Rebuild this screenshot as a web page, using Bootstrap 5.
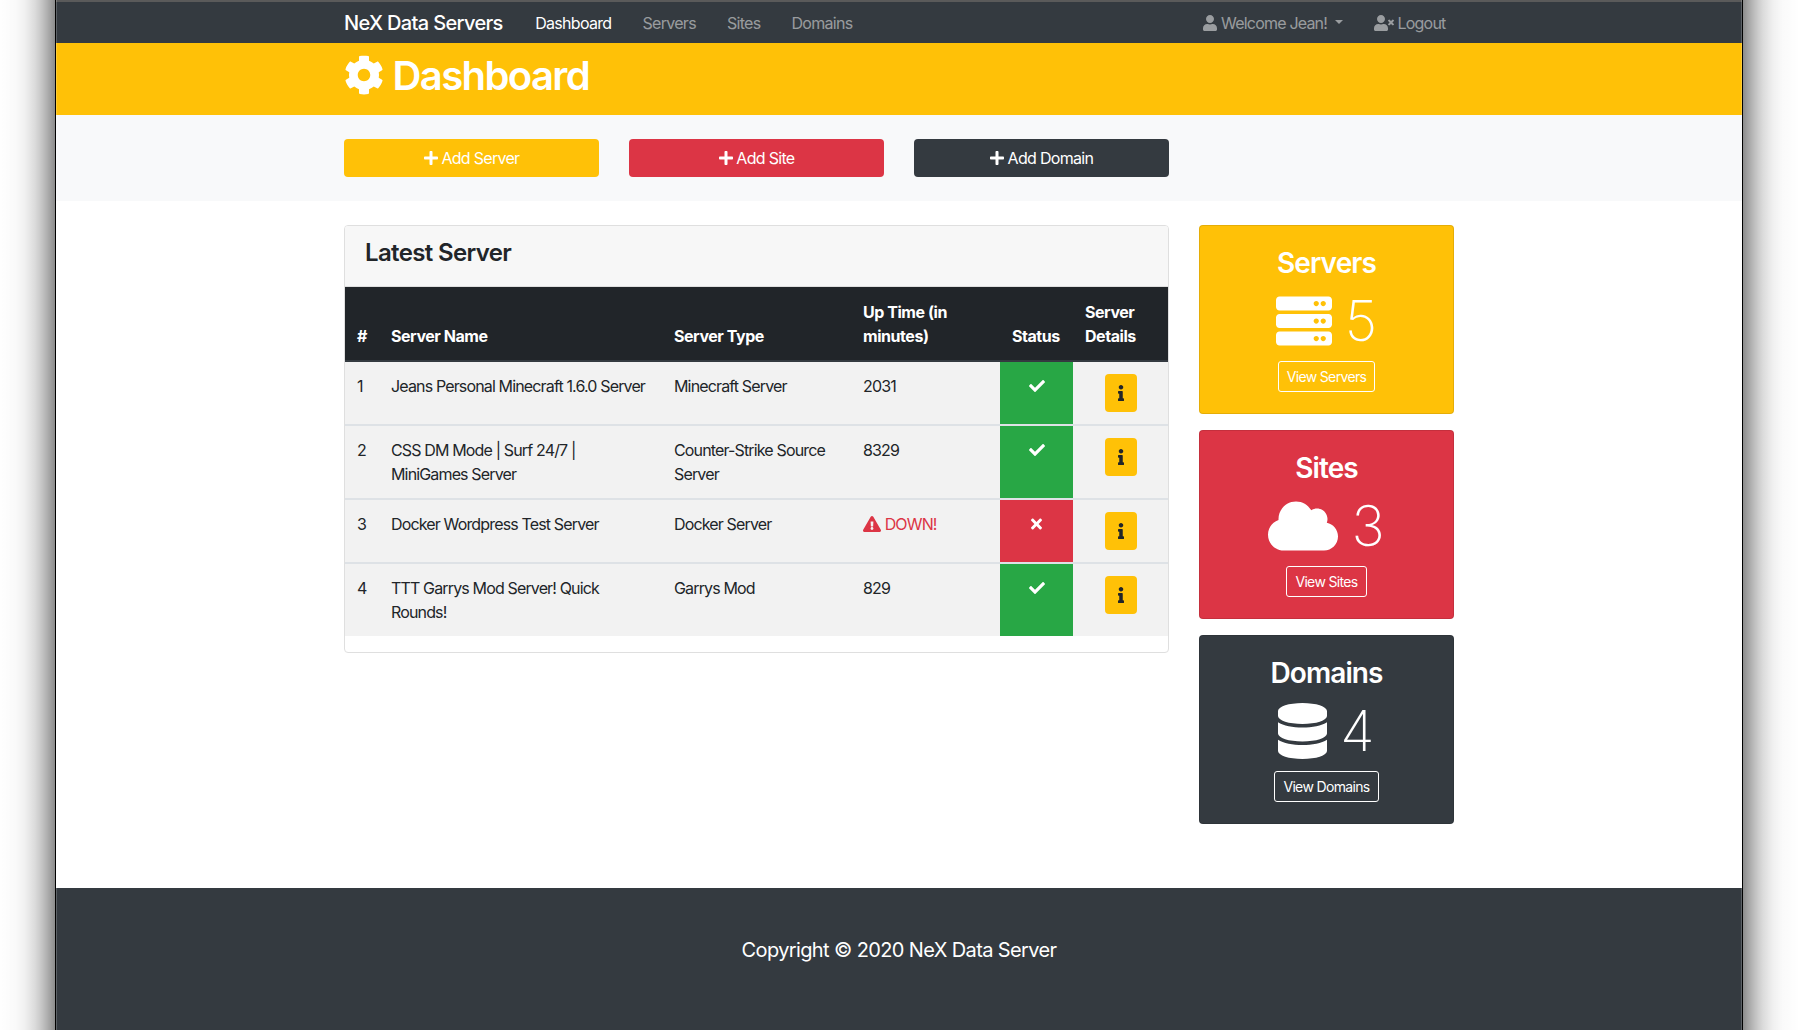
<!DOCTYPE html>
<html>
<head>
    <title>NeX Data Servers</title>
    <link href="https://cdn.jsdelivr.net/npm/bootstrap@5.3.3/dist/css/bootstrap.min.css" rel="stylesheet">
    <style>
        html, body {
          height: 100%;
          overflow: hidden;
          background: #fff;
        }
        body {
          font-family: Inter, "Liberation Sans", sans-serif;
          font-size: 16px;
          letter-spacing: -0.7px;
          color: #212529;
          /* window shadow either side of the frame */
          --shade: rgba(0,0,0,0.003) 0, rgba(0,0,0,0.02) 15px, rgba(0,0,0,0.06) 25px, rgba(0,0,0,0.143) 35px, rgba(0,0,0,0.204) 40px, rgba(0,0,0,0.278) 45px, rgba(0,0,0,0.36) 50px, rgba(0,0,0,0.45) 55px;
          background:
            linear-gradient(to right, var(--shade)) left top / 55px 100% no-repeat,
            linear-gradient(to left, var(--shade)) right top / 55px 100% no-repeat,
            #fff;
        }
        .container {
          max-width: 1140px;
          padding-left: 15px;
          padding-right: 15px;
        }
        .row {
          --bs-gutter-x: 30px;
        }
        .frame {
          position: relative;
          display: flex;
          flex-direction: column;
          height: 1030px;
          margin: 0 55px;
          background: #fff;
          border-left: 1px solid #000;
          border-right: 1px solid #000;
        }
        .frame::after {
          content: "";
          position: absolute;
          inset: 0;
          box-shadow: inset 1px 0 0 rgba(255,255,255,0.2), inset -1px 0 0 rgba(255,255,255,0.2);
          pointer-events: none;
        }
        .ico {
          display: inline-block;
          height: 1em;
          fill: currentColor;
          vertical-align: -0.125em;
        }
        .topbar {
          --bs-navbar-padding-y: 0;
          --bs-navbar-padding-x: 0;
          --bs-navbar-color: rgba(255,255,255,0.5);
          --bs-navbar-hover-color: rgba(255,255,255,0.75);
          --bs-navbar-active-color: #fff;
          --bs-navbar-brand-padding-y: 0;
          --bs-navbar-brand-margin-end: 17px;
          --bs-navbar-brand-font-size: 20px;
          --bs-navbar-brand-color: #fff;
          --bs-navbar-brand-hover-color: #fff;
          --bs-navbar-nav-link-padding-x: 15.5px;
          --bs-nav-link-padding-y: 8px;
          background: #343a40;
          border-top: 2px solid #5a5a5a;
          height: 43px;
        }
        .topbar .navbar-brand {
          font-weight: 500;
          letter-spacing: -0.65px;
        }
        .user-nav {
          margin-right: -7px;
          letter-spacing: -0.8px;
        }
        .title-band {
          background: #ffc107;
          color: #fff;
          padding: 9px 0 15px;
        }
        .title-band h1 {
          font-size: 40px;
          font-weight: 600;
          line-height: 48px;
          letter-spacing: -1.6px;
          margin: 0;
        }
        .action-band {
          background: #f8f9fa;
          padding: 24px 0;
        }
        .act-btn {
          height: 38px;
          color: #fff;
          border: 0;
          border-radius: 4px;
          padding-top: 7px;
          letter-spacing: -0.7px;
        }
        .act-btn:hover {
          color: #fff;
        }
        .fill-yellow { background: #ffc107; color: #fff; }
        .fill-red { background: #dc3545; color: #fff; }
        .fill-dark { background: #343a40; color: #fff; }
        .main-area {
          padding: 24px 0 48px;
        }
        .latest-card {
          border: 1px solid #dfdfdf;
          border-radius: 4px;
          overflow: hidden;
        }
        .latest-card .card-header {
          background: #f7f7f7;
          padding: 13px 20px 11px;
          border-bottom: 1px solid #dfdfdf;
          border-radius: 0;
        }
        .latest-card h4 {
          font-size: 24px;
          font-weight: 570;
          line-height: 28.8px;
          letter-spacing: -0.65px;
          margin: 0 0 7px;
        }
        .srv-table {
          --bs-table-bg: #f2f2f2;
          table-layout: fixed;
          letter-spacing: -0.85px;
          margin-bottom: 16px;
        }
        .srv-table > :not(caption) > * > * {
          padding: 12px;
          border-bottom: 2px solid #dee2e6;
        }
        .srv-table > thead > tr > th {
          padding-top: 13px;
          vertical-align: bottom;
          font-weight: 700;
          letter-spacing: -0.45px;
          border-bottom-color: #343a40;
        }
        .srv-table > tbody > tr:last-child > td {
          border-bottom: 0;
        }
        .srv-table > tbody > tr > .name-cell {
          padding-right: 8px;
        }
        .w-num { width: 34px; }
        .w-name { width: 283px; }
        .w-type { width: 189px; }
        .w-up { width: 149px; }
        .w-stat { width: 73px; }
        .w-info { width: 96px; }
        .srv-table > tbody > tr > .st-up {
          --bs-table-bg: #28a745;
          --bs-table-color: #fff;
          color: #fff;
          text-align: center;
        }
        .srv-table > tbody > tr > .st-down {
          --bs-table-bg: #dc3545;
          --bs-table-color: #fff;
          color: #fff;
          text-align: center;
        }
        .down-text {
          color: #dc3545;
        }
        .info-btn {
          display: flex;
          align-items: center;
          justify-content: center;
          width: 32px;
          height: 38px;
          padding: 0;
          margin: 0 auto;
          border: 0;
          border-radius: 4px;
          background: #ffc107;
          color: #212529;
        }
        .info-btn .ico {
          height: 16px;
        }
        .stat-card {
          height: 189px;
          border-radius: 4px;
          border: 1px solid rgba(0,0,0,0.1);
          padding: 21px 20px 20px;
          margin-bottom: 16px;
          text-align: center;
        }
        .stat-card h3 {
          font-size: 28px;
          font-weight: 600;
          line-height: 33.6px;
          letter-spacing: -0.9px;
          margin: 0 0 7px;
        }
        .stat-num {
          display: flex;
          justify-content: center;
          align-items: center;
          gap: 13px;
          font-size: 56px;
          font-weight: 250;
          line-height: 67px;
          letter-spacing: 0;
          margin-bottom: 6px;
        }
        .stat-num .ico {
          height: 56px;
        }
        .view-btn {
          display: inline-block;
          height: 31px;
          padding: 4px 8px;
          font-size: 14px;
          line-height: 21px;
          letter-spacing: -0.65px;
          color: #fff;
          border: 1px solid #fff;
          border-radius: 3px;
          text-decoration: none;
        }
        .view-btn:hover {
          color: #fff;
        }
        .foot-band {
          flex-grow: 1;
          background: #343a40;
          color: #fff;
          font-size: 20px;
          line-height: 30px;
          letter-spacing: -0.62px;
          padding-top: 47px;
          text-align: center;
        }
    </style>
</head>
<body>

<!-- Icons -->
<svg class="d-none" xmlns="http://www.w3.org/2000/svg">
    <symbol id="i-cog" viewBox="0 0 512 512"><path d="M487.4 315.7l-42.6-24.6c4.3-23.2 4.3-47 0-70.2l42.6-24.6c4.9-2.8 7.1-8.6 5.5-14-11.1-35.6-30-67.8-54.7-94.6-3.8-4.1-10-5.1-14.8-2.3L380.8 110c-17.9-15.4-38.5-27.3-60.8-35.1V25.8c0-5.6-3.9-10.5-9.4-11.7-36.7-8.2-74.3-7.8-109.2 0-5.5 1.2-9.4 6.1-9.4 11.7V75c-22.2 7.9-42.8 19.8-60.8 35.1L88.7 85.5c-4.9-2.8-11-1.9-14.8 2.3-24.7 26.7-43.6 58.9-54.7 94.6-1.7 5.4.6 11.2 5.5 14L67.3 221c-4.3 23.2-4.3 47 0 70.2l-42.6 24.6c-4.9 2.8-7.1 8.6-5.5 14 11.1 35.6 30 67.8 54.7 94.6 3.8 4.1 10 5.1 14.8 2.3l42.6-24.6c17.9 15.4 38.5 27.3 60.8 35.1v49.2c0 5.6 3.9 10.5 9.4 11.7 36.7 8.2 74.3 7.8 109.2 0 5.5-1.2 9.4-6.1 9.4-11.7v-49.2c22.2-7.9 42.8-19.8 60.8-35.1l42.6 24.6c4.9 2.8 11 1.9 14.8-2.3 24.7-26.7 43.6-58.9 54.7-94.6 1.5-5.5-.7-11.3-5.6-14.1zM256 336c-44.1 0-80-35.9-80-80s35.9-80 80-80 80 35.9 80 80-35.9 80-80 80z"/></symbol>
    <symbol id="i-user" viewBox="0 0 448 512"><path d="M224 256c70.7 0 128-57.3 128-128S294.7 0 224 0 96 57.3 96 128s57.3 128 128 128zm89.6 32h-16.7c-22.2 10.2-46.9 16-72.9 16s-50.6-5.8-72.9-16h-16.7C60.2 288 0 348.2 0 422.4V464c0 26.5 21.5 48 48 48h352c26.5 0 48-21.5 48-48v-41.6c0-74.2-60.2-134.4-134.4-134.4z"/></symbol>
    <symbol id="i-user-x" viewBox="0 0 640 512"><path d="M589.6 240l45.6-45.6c6.3-6.3 6.3-16.5 0-22.8l-22.8-22.8c-6.3-6.3-16.5-6.3-22.8 0L544 194.4l-45.6-45.6c-6.3-6.3-16.5-6.3-22.8 0l-22.8 22.8c-6.3 6.3-6.3 16.5 0 22.8l45.6 45.6-45.6 45.6c-6.3 6.3-6.3 16.5 0 22.8l22.8 22.8c6.3 6.3 16.5 6.3 22.8 0l45.6-45.6 45.6 45.6c6.3 6.3 16.5 6.3 22.8 0l22.8-22.8c6.3-6.3 6.3-16.5 0-22.8L589.6 240zM224 256c70.7 0 128-57.3 128-128S294.7 0 224 0 96 57.3 96 128s57.3 128 128 128zm89.6 32h-16.7c-22.2 10.2-46.9 16-72.9 16s-50.6-5.8-72.9-16h-16.7C60.2 288 0 348.2 0 422.4V464c0 26.5 21.5 48 48 48h352c26.5 0 48-21.5 48-48v-41.6c0-74.2-60.2-134.4-134.4-134.4z"/></symbol>
    <symbol id="i-plus" viewBox="0 0 448 512"><path d="M416 208H272V64c0-17.67-14.33-32-32-32h-32c-17.67 0-32 14.33-32 32v144H32c-17.67 0-32 14.33-32 32v32c0 17.67 14.33 32 32 32h144v144c0 17.67 14.33 32 32 32h32c17.67 0 32-14.33 32-32V304h144c17.67 0 32-14.33 32-32v-32c0-17.67-14.33-32-32-32z"/></symbol>
    <symbol id="i-check" viewBox="0 0 512 512"><path d="M173.898 439.404l-166.4-166.4c-9.997-9.997-9.997-26.206 0-36.204l36.203-36.204c9.997-9.998 26.207-9.998 36.204 0L192 312.69 432.095 72.596c9.997-9.997 26.207-9.997 36.204 0l36.203 36.204c9.997 9.997 9.997 26.206 0 36.204l-294.4 294.401c-9.998 9.997-26.207 9.997-36.204-.001z"/></symbol>
    <symbol id="i-times" viewBox="0 0 352 512"><path d="M242.72 256l100.07-100.07c12.28-12.28 12.28-32.19 0-44.48l-22.24-22.24c-12.28-12.28-32.19-12.28-44.48 0L176 189.28 75.93 89.21c-12.28-12.28-32.19-12.28-44.48 0L9.21 111.45c-12.28 12.28-12.28 32.19 0 44.48L109.28 256 9.21 356.07c-12.28 12.28-12.28 32.19 0 44.48l22.24 22.24c12.28 12.28 32.2 12.28 44.48 0L176 322.72l100.07 100.07c12.28 12.28 32.2 12.28 44.48 0l22.24-22.24c12.28-12.28 12.28-32.19 0-44.48L242.72 256z"/></symbol>
    <symbol id="i-warn" viewBox="0 0 576 512"><path d="M569.517 440.013C587.975 472.007 564.806 512 527.94 512H48.054c-36.937 0-59.999-40.055-41.577-71.987L246.423 24.035c18.467-32.009 64.72-31.951 83.154 0l239.94 416.978zM288 354c-25.405 0-46 20.595-46 46s20.595 46 46 46 46-20.595 46-46-20.595-46-46-46zm-43.673-165.346l7.418 136c.347 6.364 5.609 11.346 11.982 11.346h48.546c6.373 0 11.635-4.982 11.982-11.346l7.418-136c.375-6.874-5.098-12.654-11.982-12.654h-63.383c-6.884 0-12.356 5.78-11.981 12.654z"/></symbol>
    <symbol id="i-info" viewBox="0 0 192 512"><path d="M20 424.229h20V279.771H20c-11.046 0-20-8.954-20-20V212c0-11.046 8.954-20 20-20h112c11.046 0 20 8.954 20 20v212.229h20c11.046 0 20 8.954 20 20V492c0 11.046-8.954 20-20 20H20c-11.046 0-20-8.954-20-20v-47.771c0-11.046 8.954-20 20-20zM96 0C56.235 0 24 32.235 24 72s32.235 72 72 72 72-32.235 72-72S135.764 0 96 0z"/></symbol>
    <symbol id="i-server" viewBox="0 0 512 512"><path fill-rule="evenodd" d="M480 160H32c-17.673 0-32-14.327-32-32V64c0-17.673 14.327-32 32-32h448c17.673 0 32 14.327 32 32v64c0 17.673-14.327 32-32 32zm-48-88c-13.255 0-24 10.745-24 24s10.745 24 24 24 24-10.745 24-24-10.745-24-24-24zm-64 0c-13.255 0-24 10.745-24 24s10.745 24 24 24 24-10.745 24-24-10.745-24-24-24zm112 248H32c-17.673 0-32-14.327-32-32v-64c0-17.673 14.327-32 32-32h448c17.673 0 32 14.327 32 32v64c0 17.673-14.327 32-32 32zm-48-88c-13.255 0-24 10.745-24 24s10.745 24 24 24 24-10.745 24-24-10.745-24-24-24zm-64 0c-13.255 0-24 10.745-24 24s10.745 24 24 24 24-10.745 24-24-10.745-24-24-24zm112 248H32c-17.673 0-32-14.327-32-32v-64c0-17.673 14.327-32 32-32h448c17.673 0 32 14.327 32 32v64c0 17.673-14.327 32-32 32zm-48-88c-13.255 0-24 10.745-24 24s10.745 24 24 24 24-10.745 24-24-10.745-24-24-24zm-64 0c-13.255 0-24 10.745-24 24s10.745 24 24 24 24-10.745 24-24-10.745-24-24-24z"/></symbol>
    <symbol id="i-cloud" viewBox="0 0 640 512"><path d="M537.6 226.6c4.1-10.7 6.4-22.4 6.4-34.6 0-53-43-96-96-96-19.7 0-38.1 6-53.3 16.2C367 64.2 315.3 32 256 32c-88.4 0-160 71.6-160 160 0 2.7.1 5.4.2 8.1C40.2 219.8 0 273.2 0 336c0 79.5 64.5 144 144 144h368c70.7 0 128-57.3 128-128 0-61.9-44-113.6-102.4-125.4z"/></symbol>
    <symbol id="i-db" viewBox="0 0 448 512"><path d="M448 73.143v45.714C448 159.143 347.667 192 224 192S0 159.143 0 118.857V73.143C0 32.857 100.333 0 224 0s224 32.857 224 73.143zM448 176v102.857C448 319.143 347.667 352 224 352S0 319.143 0 278.857V176c48.125 33.143 136.208 48.572 224 48.572S399.874 209.143 448 176zm0 160v102.857C448 479.143 347.667 512 224 512S0 479.143 0 438.857V336c48.125 33.143 136.208 48.572 224 48.572S399.874 369.143 448 336z"/></symbol>
</svg>

<div class="frame">

    <!-- Navbar -->
    <nav class="navbar navbar-expand-lg navbar-dark topbar">
        <div class="container">
            <a class="navbar-brand" href="#">NeX Data Servers</a>
            <ul class="navbar-nav me-auto">
                <li class="nav-item"><a class="nav-link active" href="#">Dashboard</a></li>
                <li class="nav-item"><a class="nav-link" href="#">Servers</a></li>
                <li class="nav-item"><a class="nav-link" href="#">Sites</a></li>
                <li class="nav-item"><a class="nav-link" href="#">Domains</a></li>
            </ul>
            <ul class="navbar-nav user-nav">
                <li class="nav-item dropdown">
                    <a class="nav-link dropdown-toggle" href="#" data-bs-toggle="dropdown">
                        <svg class="ico" viewBox="0 0 448 512"><use href="#i-user"/></svg> Welcome Jean!
                    </a>
                    <ul class="dropdown-menu">
                        <li><a class="dropdown-item" href="#">Profile</a></li>
                    </ul>
                </li>
                <li class="nav-item">
                    <a class="nav-link" href="#"><svg class="ico" viewBox="0 0 640 512"><use href="#i-user-x"/></svg> Logout</a>
                </li>
            </ul>
        </div>
    </nav>

    <!-- Page title -->
    <div class="title-band">
        <div class="container">
            <h1><svg class="ico" viewBox="0 0 512 512"><use href="#i-cog"/></svg> Dashboard</h1>
        </div>
    </div>

    <!-- Quick actions -->
    <div class="action-band">
        <div class="container">
            <div class="row">
                <div class="col-3"><a href="#" class="btn act-btn fill-yellow w-100"><svg class="ico" viewBox="0 0 448 512"><use href="#i-plus"/></svg> Add Server</a></div>
                <div class="col-3"><a href="#" class="btn act-btn fill-red w-100"><svg class="ico" viewBox="0 0 448 512"><use href="#i-plus"/></svg> Add Site</a></div>
                <div class="col-3"><a href="#" class="btn act-btn fill-dark w-100"><svg class="ico" viewBox="0 0 448 512"><use href="#i-plus"/></svg> Add Domain</a></div>
            </div>
        </div>
    </div>

    <div class="main-area">
        <div class="container">
            <div class="row">
                <!-- Latest servers -->
                <div class="col-9">
                    <div class="card latest-card">
                        <div class="card-header"><h4>Latest Server</h4></div>
                        <table class="table srv-table">
                            <thead class="table-dark">
                                <tr>
                                    <th class="w-num">#</th>
                                    <th class="w-name">Server Name</th>
                                    <th class="w-type">Server Type</th>
                                    <th class="w-up">Up Time (in minutes)</th>
                                    <th class="w-stat">Status</th>
                                    <th class="w-info">Server Details</th>
                                </tr>
                            </thead>
                            <tbody>
                                <tr>
                                    <td>1</td>
                                    <td class="name-cell">Jeans Personal Minecraft 1.6.0 Server</td>
                                    <td>Minecraft Server</td>
                                    <td>2031</td>
                                    <td class="st-up"><svg class="ico" viewBox="0 0 512 512"><use href="#i-check"/></svg></td>
                                    <td><a href="#" class="btn info-btn"><svg class="ico" viewBox="0 0 192 512"><use href="#i-info"/></svg></a></td>
                                </tr>
                                <tr>
                                    <td>2</td>
                                    <td class="name-cell">CSS DM Mode | Surf 24/7 | MiniGames Server</td>
                                    <td>Counter-Strike Source Server</td>
                                    <td>8329</td>
                                    <td class="st-up"><svg class="ico" viewBox="0 0 512 512"><use href="#i-check"/></svg></td>
                                    <td><a href="#" class="btn info-btn"><svg class="ico" viewBox="0 0 192 512"><use href="#i-info"/></svg></a></td>
                                </tr>
                                <tr>
                                    <td>3</td>
                                    <td class="name-cell">Docker Wordpress Test Server</td>
                                    <td>Docker Server</td>
                                    <td><span class="down-text"><svg class="ico" viewBox="0 0 576 512"><use href="#i-warn"/></svg> DOWN!</span></td>
                                    <td class="st-down"><svg class="ico" viewBox="0 0 352 512"><use href="#i-times"/></svg></td>
                                    <td><a href="#" class="btn info-btn"><svg class="ico" viewBox="0 0 192 512"><use href="#i-info"/></svg></a></td>
                                </tr>
                                <tr>
                                    <td>4</td>
                                    <td class="name-cell">TTT Garrys Mod Server! Quick Rounds!</td>
                                    <td>Garrys Mod</td>
                                    <td>829</td>
                                    <td class="st-up"><svg class="ico" viewBox="0 0 512 512"><use href="#i-check"/></svg></td>
                                    <td><a href="#" class="btn info-btn"><svg class="ico" viewBox="0 0 192 512"><use href="#i-info"/></svg></a></td>
                                </tr>
                            </tbody>
                        </table>
                    </div>
                </div>

                <!-- Totals -->
                <div class="col-3">
                    <div class="stat-card fill-yellow">
                        <h3>Servers</h3>
                        <div class="stat-num"><svg class="ico" viewBox="0 0 512 512"><use href="#i-server"/></svg>5</div>
                        <a href="#" class="view-btn">View Servers</a>
                    </div>
                    <div class="stat-card fill-red">
                        <h3>Sites</h3>
                        <div class="stat-num"><svg class="ico" viewBox="0 0 640 512"><use href="#i-cloud"/></svg>3</div>
                        <a href="#" class="view-btn">View Sites</a>
                    </div>
                    <div class="stat-card fill-dark">
                        <h3>Domains</h3>
                        <div class="stat-num"><svg class="ico" viewBox="0 0 448 512"><use href="#i-db"/></svg>4</div>
                        <a href="#" class="view-btn">View Domains</a>
                    </div>
                </div>
            </div>
        </div>
    </div>

    <!-- Footer -->
    <footer class="foot-band">Copyright &copy; 2020 NeX Data Server</footer>
</div>

<script src="https://cdn.jsdelivr.net/npm/bootstrap@5.3.3/dist/js/bootstrap.bundle.min.js"></script>
</body>
</html>
